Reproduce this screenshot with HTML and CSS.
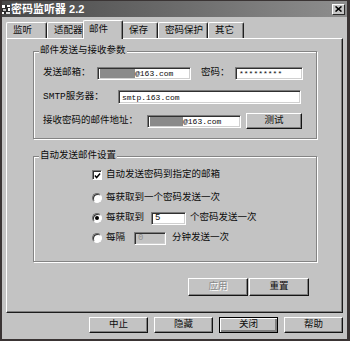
FILE: index.html
```html
<!DOCTYPE html>
<html lang="zh-CN">
<head>
<meta charset="utf-8">
<title>密码监听器 2.2</title>
<link rel="stylesheet" href="styles.css">
</head>
<body>
<div class="window">
  <div class="titlebar">
    <svg class="ticon" width="8" height="9" viewBox="0 0 8 9">
      <rect x="0" y="0" width="8" height="9" fill="#2a2a2a"/>
      <rect x="0" y="0" width="3" height="3" fill="#fff"/>
      <rect x="5" y="0" width="3" height="2" fill="#fff"/>
      <rect x="6" y="3" width="2" height="3" fill="#fff"/>
      <rect x="1" y="4" width="3" height="2" fill="#bbb"/>
      <rect x="0" y="7" width="2" height="2" fill="#fff"/>
      <rect x="4" y="7" width="4" height="2" fill="#ddd"/>
    </svg>
    <span class="ttitle">密码监听器 2.2</span>
    <span class="close">
      <svg width="7" height="6" viewBox="0 0 7 6"><path d="M0.5 0.5 L6.5 5.5 M6.5 0.5 L0.5 5.5" stroke="#000" stroke-width="1.6" fill="none"/></svg>
    </span>
  </div>
  <div class="body">
    <div class="tabs">
      <div class="tab w1">监听</div>
      <div class="tab w2">适配器</div>
      <div class="tab active w3">邮件</div>
      <div class="tab w4">保存</div>
      <div class="tab w5">密码保护</div>
      <div class="tab w6">其它</div>
    </div>
    <div class="panel">
      <div class="group g1">
        <span class="legend">邮件发送与接收参数</span>
        <div class="row">
          <span class="lbl l1">发送邮箱：</span>
          <span class="field f1"><span class="redact r1"></span>@163.com</span>
          <span class="lbl l2">密码：</span>
          <span class="field f2">*********</span>
        </div>
        <div class="row">
          <span class="lbl l3">SMTP服务器：</span>
          <span class="field f3">smtp.163.com</span>
        </div>
        <div class="row">
          <span class="lbl l4">接收密码的邮件地址：</span>
          <span class="field f4"><span class="redact r2"></span>@163.com</span>
          <span class="btn test">测试</span>
        </div>
      </div>
      <div class="group g2">
        <span class="legend">自动发送邮件设置</span>
        <div class="opt first">
          <span class="check"><svg width="8" height="8" viewBox="0 0 8 8"><path d="M1 3.5 L3 5.8 L7 1.2" stroke="#000" stroke-width="1.6" fill="none"/></svg></span>
          <span>自动发送密码到指定的邮箱</span>
        </div>
        <div class="opt">
          <span class="radio"></span>
          <span>每获取到一个密码发送一次</span>
        </div>
        <div class="opt">
          <span class="radio on"></span>
          <span>每获取到</span>
          <span class="field f5">5</span>
          <span class="after5">个密码发送一次</span>
        </div>
        <div class="opt">
          <span class="radio"></span>
          <span>每隔</span>
          <span class="field f6 disabled">0</span>
          <span class="after6">分钟发送一次</span>
        </div>
      </div>
      <div class="panel-buttons">
        <span class="btn disabled">应用</span>
        <span class="btn">重置</span>
      </div>
    </div>
    <div class="bottom-buttons">
      <span class="btn">中止</span>
      <span class="btn">隐藏</span>
      <span class="btn default">关闭</span>
      <span class="btn">帮助</span>
    </div>
  </div>
</div>
</body>
</html>
```
FILE: styles.css
```css
* { box-sizing: border-box; }
body {
  margin: 0;
  background: #c3c3c3;
  font-family: "Liberation Mono", "Noto Sans CJK SC", monospace;
  font-size: 9.5px;
  line-height: 12px;
  color: #0c0c0c;
}
.window {
  width: 350px;
  height: 341px;
  border-style: solid;
  border-color: #3a3434;
  border-width: 1px 3px 2px 2px;
  background: #c3c3c3;
  display: flex;
  flex-direction: column;
}
.titlebar {
  height: 16px;
  flex: none;
  background: linear-gradient(to right, #484848, #8e8e8e);
  display: flex;
  align-items: center;
  color: #fff;
}
.ticon { flex: none; margin-right: 1px; }
.ttitle {
  flex: 1;
  font-family: "Liberation Sans", "Noto Sans CJK SC", sans-serif;
  font-weight: bold;
  font-size: 11px;
}
.close {
  width: 13px;
  height: 11px;
  margin-right: 2px;
  background: #c6c6c6;
  border: 1px solid;
  border-color: #fff #2a2a2a #2a2a2a #fff;
  display: flex;
  align-items: center;
  justify-content: center;
}
.body {
  flex: 1;
  padding: 0 4px;
  display: flex;
  flex-direction: column;
}
.tabs {
  height: 21px;
  flex: none;
  display: flex;
  align-items: flex-end;
}
.tab {
  height: 16px;
  padding: 2px 0 0 6px;
  border: 1px solid;
  border-color: #fff #202020 transparent #fff;
  border-bottom: none;
  border-radius: 2px 2px 0 0;
  box-shadow: inset -1px 0 0 #808080;
}
.tab.active {
  height: 19px;
  margin: 0 -1px -1px -1px;
  padding-top: 3px;
  padding-left: 5px;
  background: #c3c3c3;
  position: relative;
  z-index: 1;
}
.w1 { width: 41px; }
.w2 { width: 37px; }
.w3 { width: 40px; }
.w4 { width: 36px; }
.w5 { width: 50px; }
.w6 { width: 36px; }
.panel {
  height: 275px;
  flex: none;
  border-style: solid;
  border-width: 1px;
  border-color: #fff #1c1c1c #1c1c1c #fff;
  box-shadow: inset -1px -1px 0 #808080;
  display: flex;
  flex-direction: column;
}
.group {
  position: relative;
  margin-left: 26px;
  width: 284px;
  border: 1px solid #848484;
  box-shadow: inset 1px 1px 0 #fff, 1px 1px 0 #fff;
}
.legend {
  position: absolute;
  top: -7px;
  left: 5px;
  padding: 0 1px;
  background: #c3c3c3;
}
.g1 {
  margin-top: 12px;
  height: 88px;
  padding: 9px 0 0 9px;
}
.row {
  height: 24px;
  display: flex;
  align-items: center;
}
.lbl { flex: none; white-space: nowrap; }
.l1 { width: 54px; }
.l2 { width: 34px; margin-left: 10px; }
.l3 { width: 75px; }
.l4 { width: 104px; }
.field {
  flex: none;
  height: 13px;
  background: #fff;
  border: 1px solid;
  border-color: #7c7c7c #fff #fff #7c7c7c;
  box-shadow: inset 1px 1px 0 #303030, inset -1px -1px 0 #d0d0d0;
  font-family: "Liberation Mono", monospace;
  font-size: 8px;
  line-height: 11px;
  padding: 0 0 0 3px;
  display: flex;
  align-items: center;
  white-space: nowrap;
  overflow: hidden;
}
.f1 { width: 94px; }
.f2 { width: 68px; }
.f3 { width: 183px; height: 14px; }
.f4 { width: 94px; }
.redact {
  display: block;
  height: 9px;
  background: #8a8a8a;
}
.r1 { width: 35px; margin-left: -1px; }
.r2 { width: 33px; margin-left: -1px; }
.btn {
  flex: none;
  width: 59px;
  height: 16px;
  border: 1px solid;
  border-color: #fff #141414 #141414 #fff;
  box-shadow: inset -1px -1px 0 #808080;
  display: flex;
  align-items: center;
  justify-content: center;
  background: #c3c3c3;
}
.btn.test { width: 56px; margin-left: 5px; }
.btn.disabled {
  color: #8a8a8a;
  text-shadow: 1px 1px 0 #fff;
}
.btn.default {
  border: 1px solid #000;
  box-shadow: inset 1px 1px 0 #fff, inset -2px -2px 0 #808080, inset -1px -1px 0 #141414;
}
.g2 {
  margin-top: 17px;
  height: 106px;
  padding: 8px 0 0 58px;
}
.opt {
  height: 20px;
  display: flex;
  align-items: center;
}
.opt.first { margin-bottom: 3px; }
.check {
  flex: none;
  width: 10px;
  height: 10px;
  margin-right: 4px;
  background: #fff;
  border: 1px solid;
  border-color: #7c7c7c #fff #fff #7c7c7c;
  box-shadow: inset 1px 1px 0 #303030;
  display: flex;
  align-items: center;
  justify-content: center;
  padding: 1px 0 0 1px;
}
.radio {
  flex: none;
  width: 10px;
  height: 10px;
  margin-right: 4px;
  border-radius: 50%;
  background: #fff;
  border: 1px solid;
  border-color: #6c6c6c #fff #fff #6c6c6c;
  box-shadow: inset 1px 1px 0 #303030;
  display: flex;
  align-items: center;
  justify-content: center;
}
.radio.on::after {
  content: "";
  width: 4px;
  height: 4px;
  border-radius: 50%;
  background: #000;
}
.f5 { width: 35px; margin-left: 7px; font-size: 9px; }
.after5 { margin-left: 4px; }
.f6 { width: 32px; margin-left: 9px; font-size: 9px; }
.f6.disabled { background: #c3c3c3; color: #909090; }
.after6 { margin-left: 6px; }
.panel-buttons {
  margin-top: 16px;
  margin-right: 33px;
  display: flex;
  justify-content: flex-end;
  gap: 1px;
}
.panel-buttons .btn { width: 60px; height: 18px; }
.bottom-buttons {
  margin-top: 4px;
  display: flex;
  justify-content: flex-end;
  gap: 6px;
}
```
